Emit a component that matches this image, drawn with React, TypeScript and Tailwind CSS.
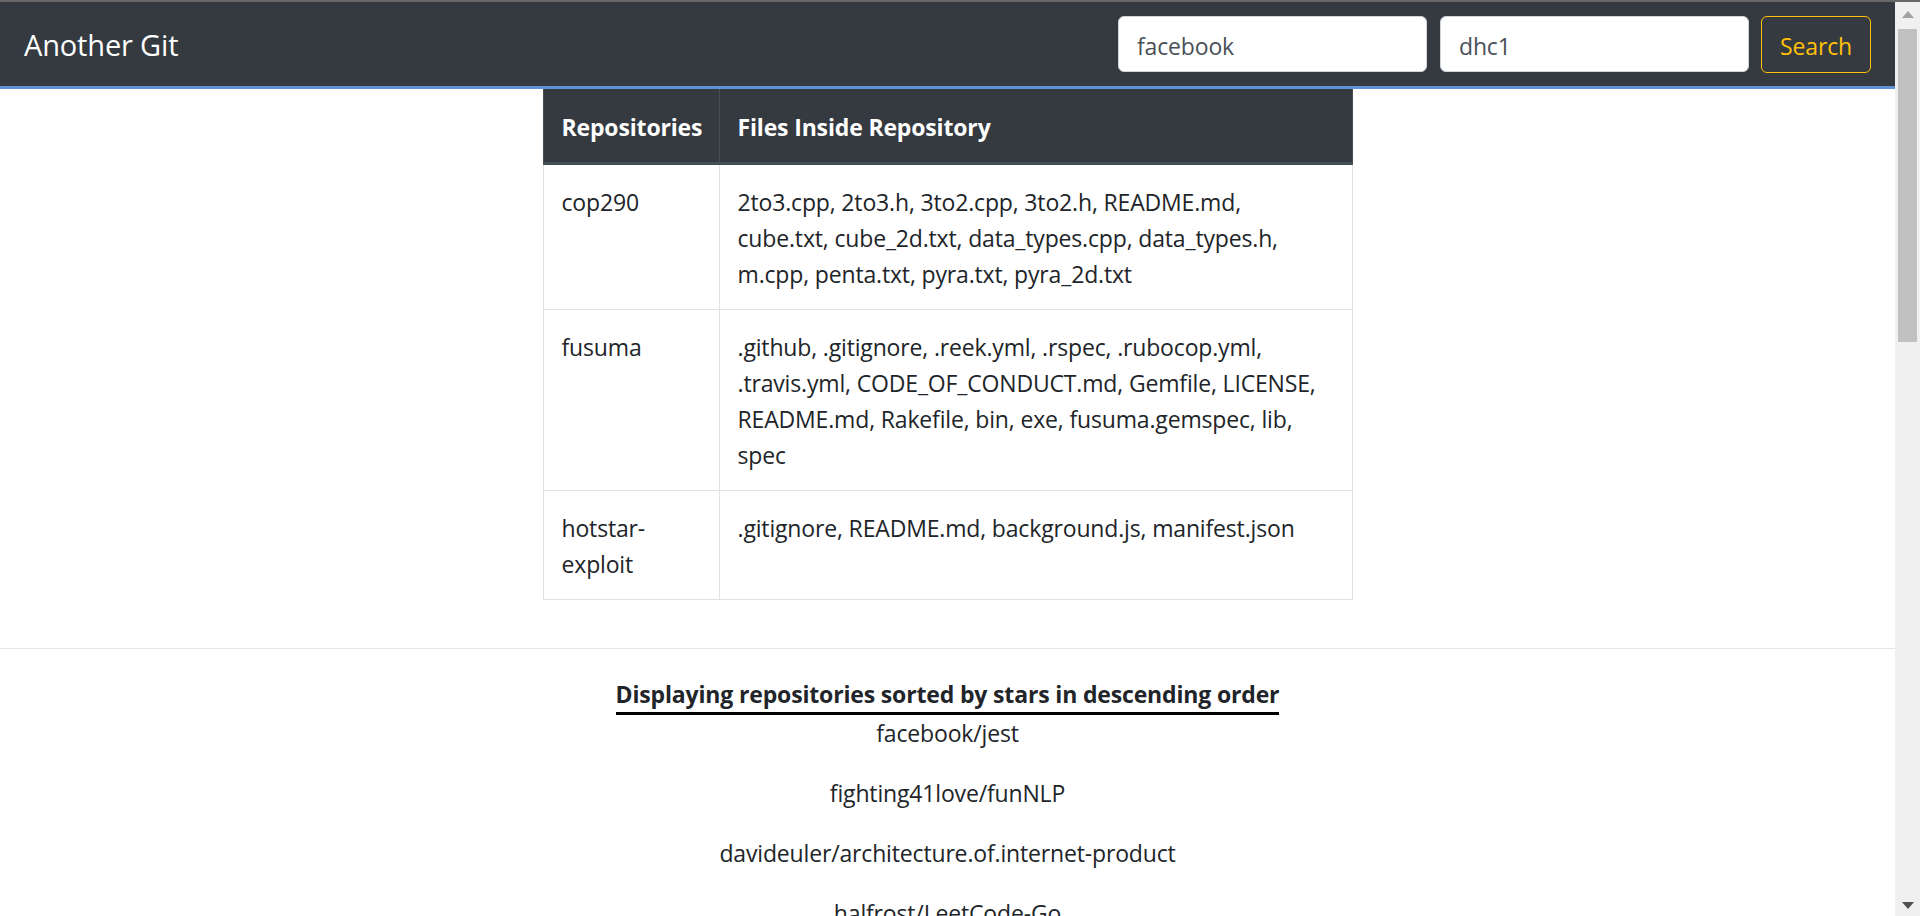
import React from "react";

const rows: { repo: string[]; files: string[] }[] = [
  {
    repo: ["cop290"],
    files: [
      "2to3.cpp, 2to3.h, 3to2.cpp, 3to2.h, README.md,",
      "cube.txt, cube_2d.txt, data_types.cpp, data_types.h,",
      "m.cpp, penta.txt, pyra.txt, pyra_2d.txt",
    ],
  },
  {
    repo: ["fusuma"],
    files: [
      ".github, .gitignore, .reek.yml, .rspec, .rubocop.yml,",
      ".travis.yml, CODE_OF_CONDUCT.md, Gemfile, LICENSE,",
      "README.md, Rakefile, bin, exe, fusuma.gemspec, lib,",
      "spec",
    ],
  },
  {
    repo: ["hotstar-", "exploit"],
    files: [".gitignore, README.md, background.js, manifest.json"],
  },
];

const starred = [
  "facebook/jest",
  "fighting41love/funNLP",
  "davideuler/architecture.of.internet-product",
  "halfrost/LeetCode-Go",
];

function Scrollbar() {
  return (
    <div className="w-[25px] shrink-0 bg-[#f0f0f0] flex flex-col items-center">
      <div className="h-[25px] w-full flex items-center justify-center">
        <svg width="12" height="7" viewBox="0 0 12 7">
          <polygon points="6,0 12,7 0,7" fill="#a3a3a3" />
        </svg>
      </div>
      <div className="mt-[2px] h-[313px] w-[19px] bg-[#c1c1c1]" />
      <div className="flex-1" />
      <div className="h-[22px] w-full flex items-center justify-center">
        <svg width="12" height="7" viewBox="0 0 12 7">
          <polygon points="0,0 12,0 6,7" fill="#505050" />
        </svg>
      </div>
    </div>
  );
}

export default function App() {
  return (
    <div className="h-[916px] w-full overflow-hidden flex flex-col bg-white text-[#212529] tracking-[-0.01em] font-['Open_Sans','Noto_Sans',sans-serif]">
      <div className="h-[2px] shrink-0 bg-[#666666]" />
      <div className="flex flex-1 min-h-0">
        <div className="flex-1 min-w-0 overflow-hidden">
          <nav className="h-[87px] bg-[#343a40] border-b-[3px] border-[#5f8fd6] flex items-center justify-between pl-[24px] pr-[24px]">
            <span className="text-[29px] leading-[45px] text-white">Another Git</span>
            <div className="flex items-center">
              <input
                className="w-[309px] h-[56px] rounded-[6px] border border-[#ced4da] bg-white px-[18px] pt-[3px] text-[23px] leading-[36px] text-[#495057] outline-none"
                defaultValue="facebook"
              />
              <input
                className="ml-[13px] w-[309px] h-[56px] rounded-[6px] border border-[#ced4da] bg-white px-[18px] pt-[3px] text-[23px] leading-[36px] text-[#495057] outline-none"
                defaultValue="dhc1"
              />
              <button className="ml-[12px] w-[110px] h-[57px] pt-[3px] rounded-[6px] border border-[#ffc107] text-[#ffc107] text-[23px] leading-[36px]">
                Search
              </button>
            </div>
          </nav>

          <table className="mx-auto w-[809px] table-fixed border-collapse text-[23px] leading-[36px]">
            <colgroup>
              <col className="w-[176px]" />
              <col className="w-[633px]" />
            </colgroup>
            <thead>
              <tr className="bg-[#343a40] text-white">
                <th className="px-[18px] pt-[20px] pb-[17px] text-left font-bold whitespace-nowrap border-x border-[#454d55] border-b-[3px] border-b-[#454d55]">
                  Repositories
                </th>
                <th className="px-[18px] pt-[20px] pb-[17px] text-left font-bold whitespace-nowrap border-x border-[#454d55] border-b-[3px] border-b-[#454d55]">
                  Files Inside Repository
                </th>
              </tr>
            </thead>
            <tbody>
              {rows.map((r) => (
                <tr key={r.repo.join("")}>
                  <td className="px-[18px] pt-[19px] pb-[17px] align-top border border-[#dee2e6]">
                    {r.repo.map((l) => (
                      <span key={l} className="block whitespace-nowrap">
                        {l}
                      </span>
                    ))}
                  </td>
                  <td className="px-[18px] pt-[19px] pb-[17px] align-top border border-[#dee2e6]">
                    {r.files.map((l) => (
                      <span key={l} className="block whitespace-nowrap">
                        {l}
                      </span>
                    ))}
                  </td>
                </tr>
              ))}
            </tbody>
          </table>

          <hr className="mt-[48px] mb-[26px] border-0 border-t border-[#e6e6e6]" />

          <div className="text-center text-[23px] leading-[36px]">
            <div>
              <span className="inline-block pt-[1px] font-bold border-b-[3px] border-black">
                Displaying repositories sorted by stars in descending order
              </span>
            </div>
            {starred.map((s) => (
              <p key={s} className="mb-[24px]">
                {s}
              </p>
            ))}
          </div>
        </div>
        <Scrollbar />
      </div>
    </div>
  );
}
